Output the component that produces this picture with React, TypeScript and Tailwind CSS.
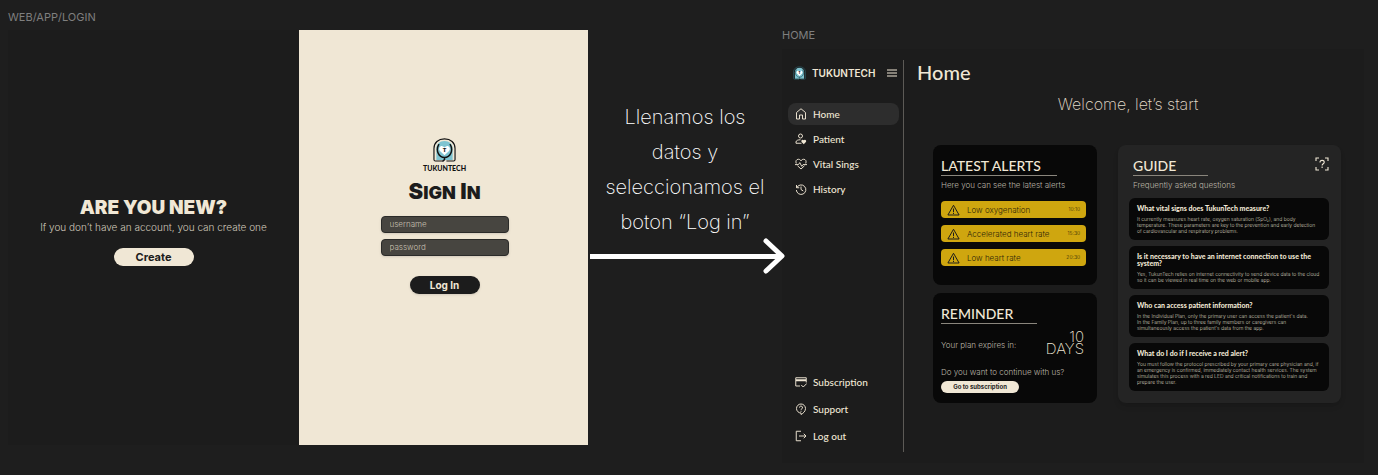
import type { ReactNode } from "react";

const alerts = [
  { label: "Low oxygenation", time: "10:10" },
  { label: "Accelerated heart rate", time: "15:30" },
  { label: "Low heart rate", time: "20:30" },
];

const faqs: { question: string; answer: ReactNode }[] = [
  {
    question: "What vital signs does TukunTech measure?",
    answer: (
      <>
        It currently measures heart rate, oxygen saturation (SpO₂), and body
        <br />
        temperature. These parameters are key to the prevention and early detection
        <br />
        of cardiovascular and respiratory problems.
      </>
    ),
  },
  {
    question: "Is it necessary to have an internet connection to use the system?",
    answer: (
      <>
        Yes, TukunTech relies on internet connectivity to send device data to the cloud
        <br />
        so it can be viewed in real time on the web or mobile app.
      </>
    ),
  },
  {
    question: "Who can access patient information?",
    answer: (
      <>
        In the Individual Plan, only the primary user can access the patient's data.
        <br />
        In the Family Plan, up to three family members or caregivers can
        <br />
        simultaneously access the patient's data from the app.
      </>
    ),
  },
  {
    question: "What do I do if I receive a red alert?",
    answer: (
      <>
        You must follow the protocol prescribed by your primary care physician and, if
        <br />
        an emergency is confirmed, immediately contact health services. The system
        <br />
        simulates this process with a red LED and critical notifications to train and
        <br />
        prepare the user.
      </>
    ),
  },
];

function Icon({ children }: { children: ReactNode }) {
  return (
    <svg viewBox="0 0 24 24" className="size-3 shrink-0" fill="none" stroke="currentColor" strokeWidth="1.9" aria-hidden="true">
      {children}
    </svg>
  );
}

function HomeIcon() {
  return (
    <Icon>
      <path d="M3 22V9l9-7.5L21 9v13h-6v-8H9v8z" />
    </Icon>
  );
}

function PatientIcon() {
  return (
    <Icon>
      <circle cx="11" cy="6" r="4" />
      <path d="M13 20.500H2v-2.500c0-3 4-4.500 9-4.500" />
      <path d="M17.500 22.500l-4.300-4.500a2.700 2.700 0 0 1 4.300-3.300 2.700 2.700 0 0 1 4.300 3.300z" fill="currentColor" stroke="none" />
    </Icon>
  );
}

function VitalIcon() {
  return (
    <Icon>
      <path d="M2.500 11C0.500 6 3 2.500 6.700 2.500c2.500 0 4.300 1.500 5.300 3.300 1-1.800 2.800-3.300 5.300-3.300C21 2.500 23.500 6 21.500 11M5 15.500l7 6.500 7-6.500" />
      <path d="M0 13.200h7l2.500-4 4 7.500 2.500-3.500h8" />
    </Icon>
  );
}

function HistoryIcon() {
  return (
    <Icon>
      <path d="M3 4v5.500h5.500M3.500 9.500A9.500 9.500 0 1 1 2.700 14" />
      <path d="M12 7v6l4.500 3" />
    </Icon>
  );
}

function SubscriptionIcon() {
  return (
    <Icon>
      <path d="M10 20H1.500V3.500h21V13" />
      <path d="M2 8.500h20" strokeWidth="4" />
      <path d="M12.500 18l4 4 7-7" />
    </Icon>
  );
}

function SupportIcon() {
  return (
    <Icon>
      <path d="M12 23v-3a9 9 0 1 1 9-9c0 5-4 9.500-9 12z" />
      <path d="M9 9.200a3 3 0 1 1 4.500 2.500c-1 .7-1.500 1.200-1.500 2.300M12 15.500v2" />
    </Icon>
  );
}

function LogoutIcon() {
  return (
    <Icon>
      <path d="M12 2.500H2.500v19H12M8 12h14M17.500 7.500L22 12l-4.500 4.500" />
    </Icon>
  );
}

function WarningIcon() {
  return (
    <svg viewBox="0 0 26 24" className="h-3 w-[13px] shrink-0" fill="none" stroke="#1c1c1c" strokeWidth="2" aria-hidden="true">
      <path d="M13 2.500L1.800 22h22.400zM13 9v7M13 17.500v2.500" />
    </svg>
  );
}

function Logo({ className, outline }: { className: string; outline: string }) {
  return (
    <svg viewBox="0 0 48 50" className={className} fill="none" aria-hidden="true">
      <path d="M7 46V22C7 12 14 6 24 6s17 6 17 16v24z" fill="#7fc4d1" />
      <path d="M21 48H5c-2 0-3-1-3-3V22C2 9.500 11 1.800 24 1.800S46 9.500 46 22v23c0 2-1 3-3 3H28" stroke={outline} strokeWidth="2.400" />
      <path d="M12 14c-3 5-4 12-1 18 2.500 5.500 7.500 8.500 13 8.500s10.500-3 13-8.500c3-6 2-13-1-18M24 40.500V45l-3 3" stroke={outline} strokeWidth="3" strokeLinecap="round" />
      <path d="M24 36L14.500 27c-4-5 0-11 5-10 2 .3 3.500 1.200 4.500 3 1-1.800 2.500-2.700 4.500-3 5-1 9 5 5 10z" fill="#fff" />
      <text x="24" y="30" textAnchor="middle" fontSize="11" fontWeight="900" fontFamily="Inter, sans-serif" fill="#1c1c1c">
        T
      </text>
    </svg>
  );
}

function NavItem({ icon, label, active = false }: { icon: ReactNode; label: string; active?: boolean }) {
  return (
    <a
      href="#"
      className={
        active
          ? "flex h-[22px] items-center gap-[6px] rounded-lg bg-[#2d2d2d] pl-[7px]"
          : "flex h-[22px] items-center gap-[6px] rounded-lg pl-[7px]"
      }
    >
      {icon}
      {label}
    </a>
  );
}

function LoginFrame() {
  return (
    <section className="pt-2">
      <p className="h-[22px] text-[11px] leading-[18px] text-[#7f7f7f]">WEB/APP/LOGIN</p>
      <div className="grid min-h-[415px] grid-cols-[291fr_289fr] bg-[#1c1c1c]">
        <div className="flex flex-col items-center justify-center pb-3">
          <h2 className="text-[19px] leading-5 font-black whitespace-nowrap text-[#f0e7d5]">ARE YOU NEW?</h2>
          <p className="text-[10px] leading-[18px] font-light whitespace-nowrap text-[#cfc8ba]">
            If you don’t have an account, you can create one
          </p>
          <button type="button" className="mt-3 h-[18px] w-20 rounded-full bg-[#f0e7d5] text-[11px] leading-[18px] font-bold text-[#1c1c1c]">
            Create
          </button>
        </div>
        <div className="flex flex-col items-center justify-center bg-[#f0e7d5] pb-11 pl-[2px]">
          <Logo className="h-6 w-[23px]" outline="#111111" />
          <p className="mt-px font-[Lato,sans-serif] text-[7px] leading-[10px] font-black text-[#111111]">TUKUNTECH</p>
          <h2 className="mt-2 text-[22px] leading-5 font-black whitespace-nowrap text-[#1c1c1c]">
            S<span className="text-lg leading-5">IGN</span> I<span className="text-lg leading-5">N</span>
          </h2>
          <form className="mt-[13px] flex flex-col items-center" onSubmit={(event) => event.preventDefault()}>
            <div className="flex flex-col gap-[6px]">
              <input
                aria-label="username"
                placeholder="username"
                className="h-[17px] w-32 rounded border border-[#2b2b29] bg-[#474540] px-2 text-[8px] font-light text-[#f0e7d5] shadow-sm outline-none placeholder:text-[#c9c1b2]"
              />
              <input
                type="password"
                aria-label="password"
                placeholder="password"
                className="h-[17px] w-32 rounded border border-[#2b2b29] bg-[#474540] px-2 text-[8px] font-light text-[#f0e7d5] shadow-sm outline-none placeholder:text-[#c9c1b2]"
              />
            </div>
            <button type="submit" className="mt-5 h-[18px] w-[70px] rounded-full bg-[#1c1c1c] text-[10px] leading-[18px] font-bold text-[#f0e7d5] shadow-sm">
              Log In
            </button>
          </form>
        </div>
      </div>
    </section>
  );
}

function Step() {
  return (
    <section className="flex flex-col pt-[100px]">
      <p className="px-2 text-center text-xl leading-[35px] font-extralight whitespace-nowrap text-white">
        Llenamos los
        <br />
        datos y
        <br />
        seleccionamos el
        <br />
        boton “Log in”
      </p>
      <div className="relative z-10 -mt-[2px] -mr-[3px] ml-[2px] flex items-center" aria-hidden="true">
        <div className="h-[5px] flex-1 bg-white" />
        <svg viewBox="0 0 22 36" className="-ml-[18px] h-9 w-[22px]" fill="none" stroke="#fff" strokeWidth="5" strokeLinecap="round" strokeLinejoin="round">
          <path d="M3 3l16 15L3 33" />
        </svg>
      </div>
    </section>
  );
}

function Sidebar() {
  return (
    <aside className="flex w-[122px] shrink-0 flex-col border-r border-[#5c5a56] pl-[6px] font-[Lato,sans-serif] text-[10px] font-medium text-[#f0e7d5]">
      <div className="flex h-[26px] items-center pr-[6px] pl-[5px]">
        <Logo className="h-[14px] w-[13px]" outline="#2f5f69" />
        <span className="ml-[6px] flex-1 font-[Inter,sans-serif] text-[10px] font-semibold">TUKUNTECH</span>
        <button type="button" aria-label="Menu">
          <svg viewBox="0 0 10 8" className="h-2 w-[10px]" stroke="currentColor" strokeWidth="1" aria-hidden="true">
            <path d="M0 1h10M0 4h10M0 7h10" />
          </svg>
        </button>
      </div>
      <nav className="mt-[17px] mr-1 flex flex-1 flex-col justify-between">
        <div className="flex flex-col gap-[3px]">
          <NavItem icon={<HomeIcon />} label="Home" active />
          <NavItem icon={<PatientIcon />} label="Patient" />
          <NavItem icon={<VitalIcon />} label="Vital Sings" />
          <NavItem icon={<HistoryIcon />} label="History" />
        </div>
        <div className="flex flex-col gap-[5px] pb-[5px]">
          <NavItem icon={<SubscriptionIcon />} label="Subscription" />
          <NavItem icon={<SupportIcon />} label="Support" />
          <NavItem icon={<LogoutIcon />} label="Log out" />
        </div>
      </nav>
    </aside>
  );
}

function CardTitle({ children }: { children: ReactNode }) {
  return <h2 className="font-[Lato,sans-serif] text-sm leading-[18px] font-medium whitespace-nowrap text-[#f0e7d5]">{children}</h2>;
}

function AlertsCard() {
  return (
    <section className="h-[140px] rounded-lg bg-[#080808] px-2 pt-3">
      <CardTitle>LATEST ALERTS</CardTitle>
      <div className="h-px w-[116px] bg-[#8a867d]" />
      <p className="mt-[3px] text-[8px] leading-3 font-light whitespace-nowrap text-[#bdb6a8]">Here you can see the latest alerts</p>
      <ul className="mt-[10px] mr-[3px] flex flex-col gap-[7px]">
        {alerts.map((alert) => (
          <li key={alert.label} className="flex h-[17px] items-center rounded bg-[#cfa60f] px-[6px] text-[8px] font-light text-[#2b2408]">
            <WarningIcon />
            <span className="ml-[7px] flex-1 whitespace-nowrap">{alert.label}</span>
            <time className="text-[5px]">{alert.time}</time>
          </li>
        ))}
      </ul>
    </section>
  );
}

function ReminderCard() {
  return (
    <section className="h-[110px] rounded-lg bg-[#080808] px-2 pt-3">
      <CardTitle>REMINDER</CardTitle>
      <div className="h-px w-24 bg-[#8a867d]" />
      <div className="mt-[7px] flex items-center justify-between pr-[5px]">
        <p className="pt-1 text-[8px] font-light text-[#bdb6a8]">Your plan expires in:</p>
        <p className="text-right text-[15px] leading-3 font-extralight text-[#f0e7d5]">
          10
          <br />
          DAYS
        </p>
      </div>
      <p className="mt-[11px] text-[8px] leading-3 font-light whitespace-nowrap text-[#bdb6a8]">Do you want to continue with us?</p>
      <button type="button" className="mt-[3px] block h-3 w-[78px] rounded-full bg-[#f0e7d5] text-[6px] leading-3 font-bold text-[#1c1c1c]">
        Go to subscription
      </button>
    </section>
  );
}

function GuideCard() {
  return (
    <section className="rounded-lg bg-[#242424] pt-3 pr-3 pl-[11px] shadow-md">
      <div className="flex justify-between pl-1">
        <div>
          <CardTitle>GUIDE</CardTitle>
          <div className="h-px w-[75px] bg-[#8a867d]" />
          <p className="mt-[3px] text-[8px] leading-3 font-light text-[#bdb6a8]">Frequently asked questions</p>
        </div>
        <button type="button" aria-label="Help" className="size-[14px] text-[#f0e7d5]">
          <svg viewBox="0 0 28 28" className="size-[14px]" fill="none" stroke="currentColor" strokeWidth="2.200" aria-hidden="true">
            <path d="M2 8V2h6M20 2h6v6M26 20v6h-6M8 26H2v-6" />
            <path d="M10 11c0-2.700 1.800-4.300 4.200-4.300S18.500 8.300 18.500 10.500c0 3-4.300 3.200-4.300 6.500M14.200 19v2.800" />
          </svg>
        </button>
      </div>
      <div className="mt-[7px] flex flex-col gap-[6px]">
        {faqs.map((faq) => (
          <article key={faq.question} className="rounded-md bg-[#080808] px-2 pt-[7px] pb-[6px]">
            <h3 className="pr-2 font-[Lato,sans-serif] text-[7px] leading-[7px] font-black text-[#f0e7d5]">{faq.question}</h3>
            <p className="mt-1 text-[5px] leading-[6px] font-light whitespace-nowrap text-[#cfc8ba]">{faq.answer}</p>
          </article>
        ))}
      </div>
    </section>
  );
}

function HomeFrame() {
  return (
    <section className="pt-[26px]">
      <p className="h-[23px] text-[11px] leading-[18px] text-[#7f7f7f]">HOME</p>
      <div className="flex min-h-[414px] bg-[#1c1c1c] pt-[11px] pr-[23px] pb-[11px]">
        <Sidebar />
        <main className="min-w-0 flex-1 pl-[13px]">
          <h1 className="font-[Lato,sans-serif] text-xl leading-6 font-medium text-[#f0e7d5]">Home</h1>
          <p className="mt-[9px] pr-[2px] text-center text-base leading-[22px] font-extralight text-[#e4dccb]">Welcome, let’s start</p>
          <div className="mt-[30px] grid grid-cols-[164fr_223fr] gap-[21px] pl-4">
            <div className="flex flex-col gap-2">
              <AlertsCard />
              <ReminderCard />
            </div>
            <GuideCard />
          </div>
        </main>
      </div>
    </section>
  );
}

export default function App() {
  return (
    <div className="min-h-screen bg-[#1e1e1e] pr-[14px] pl-2 font-[Inter,sans-serif]">
      <div className="grid grid-cols-[580fr_194fr_582fr]">
        <LoginFrame />
        <Step />
        <HomeFrame />
      </div>
    </div>
  );
}
